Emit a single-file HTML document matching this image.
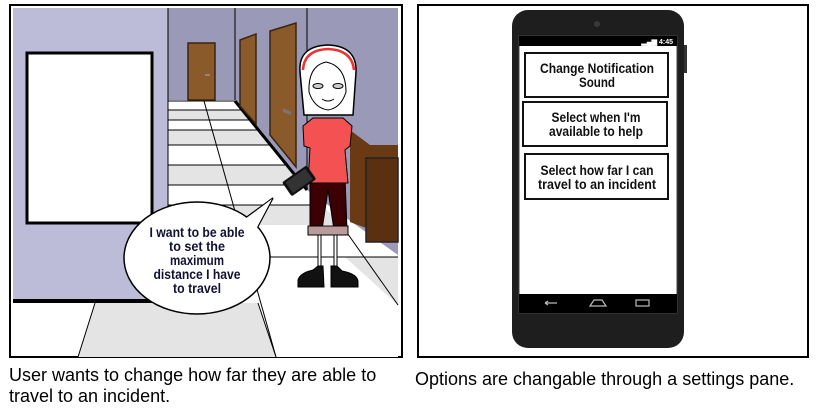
<!DOCTYPE html>
<html><head><meta charset="utf-8"><style>
html,body{margin:0;padding:0;background:#fff;width:818px;height:413px;overflow:hidden}
.cap{position:absolute;font-family:"Liberation Sans",sans-serif;font-size:18px;color:#000;line-height:21px}
.bt{font-family:"Liberation Sans",sans-serif;font-weight:bold;text-anchor:middle}
</style></head><body>
<svg width="818" height="413" style="position:absolute;left:0;top:0" xmlns="http://www.w3.org/2000/svg">
<rect x="10" y="5" width="392" height="352" fill="#fff" stroke="#000" stroke-width="2"/>
<rect x="168" y="8" width="230" height="95" fill="#9a9ab8"/>
<rect x="307" y="8" width="91" height="250" fill="#9a9ab8"/>
<polygon points="235,8 307,8 307,190 235,100" fill="#9a9ab8"/>
<line x1="235" y1="8" x2="235" y2="100" stroke="#000" stroke-width="1"/>
<line x1="307" y1="8" x2="307" y2="190" stroke="#000" stroke-width="1"/>
<polygon points="168,100 235,100 307,190 398,255 398,357 168,357" fill="#fff"/>
<g fill="#e4e4e4">
<polygon points="168,110 243,110 252,120 168,120"/>
<polygon points="168,130 260,130 272,145 168,145"/>
<polygon points="168,165 285,165 300,185 168,185"/>
<polygon points="168,205 320,205 345,225 168,225"/>
<polygon points="345,257 398,257 398,305"/>
</g>
<g stroke="#000" stroke-width="1">
<line x1="168" y1="101" x2="235" y2="101"/>
<line x1="168" y1="110" x2="243" y2="110"/>
<line x1="168" y1="120" x2="252" y2="120"/>
<line x1="168" y1="130" x2="260" y2="130"/>
<line x1="168" y1="145" x2="272" y2="145"/>
<line x1="168" y1="165" x2="285" y2="165"/>
<line x1="168" y1="185" x2="300" y2="185"/>
<line x1="168" y1="205" x2="320" y2="205"/>
<line x1="204" y1="101" x2="276" y2="357"/>
<line x1="268" y1="257" x2="398" y2="257"/>
<line x1="345" y1="230" x2="398" y2="305"/>
</g>
<line x1="235" y1="101" x2="307" y2="190" stroke="#000" stroke-width="3"/>
<rect x="188" y="43" width="27" height="57" fill="#8b5a2b" stroke="#3a2410" stroke-width="1.5"/>
<rect x="205" y="74" width="5" height="2" fill="#888"/>
<polygon points="240,40 256,34 256,124 240,106" fill="#8b5a2b" stroke="#3a2410" stroke-width="1.5"/>
<polygon points="270,31 296,23 296,167 270,135" fill="#8b5a2b" stroke="#3a2410" stroke-width="1.5"/>
<polygon points="283,108 291,112 291,115 283,112" fill="#777"/>
<polygon points="350,130 370,145 398,145 398,240 350,222" fill="#6a3a14"/>
<rect x="366" y="158" width="32" height="84" fill="#5a3010" stroke="#222" stroke-width="1.5"/>
<rect x="13" y="8" width="155" height="295" fill="#bcbcd8"/>
<line x1="168" y1="8" x2="168" y2="303" stroke="#000" stroke-width="1"/>
<rect x="13" y="299" width="155" height="4" fill="#000"/>
<rect x="27" y="53" width="125" height="170" fill="#fff" stroke="#000" stroke-width="3"/>
<polygon points="95,303 258,303 276,357 78,357" fill="#e4e4e4"/>
<line x1="95" y1="303" x2="78" y2="357" stroke="#000"/>
<line x1="258" y1="303" x2="276" y2="357" stroke="#000"/>
<g stroke="#000" stroke-width="1">
<rect x="318" y="228" width="3" height="40" fill="#fff"/>
<rect x="334" y="228" width="3" height="40" fill="#fff"/>
<path d="M298,287 L298,280 Q300,273 313,270 L318,266 L323,266 L324,287 Z" fill="#111"/>
<path d="M331,287 L331,266 L337,266 L342,271 Q358,274 358,282 L358,287 Z" fill="#111"/>
<path d="M310,178 L345,178 L347,230 L334,230 L328,190 L322,230 L310,230 Z" fill="#3c0004"/>
<rect x="308" y="226" width="40" height="9" fill="#b89c9c"/>
<path d="M313,118 L343,118 L352,126 L350,146 L345,150 L348,183 L308,183 L310,148 L304,146 L303,126 Z" fill="#f45252"/>
<path d="M300,72 Q298,46 328,45 Q357,46 356,72 L353,115 L304,115 Z" fill="#fff" stroke-width="1.5"/>
<path d="M303,70 Q304,50 328,49 Q352,50 354,70" fill="none" stroke="#e33" stroke-width="2.5"/>
<path d="M309,92 Q308,66 326,62 Q346,66 346,92 Q341,108 328,110 Q314,108 309,92 Z" fill="#fff"/>
<ellipse cx="318" cy="86" rx="5" ry="2.5" fill="#ccc"/>
<ellipse cx="338" cy="86" rx="5" ry="2.5" fill="#ccc"/>
<path d="M322,99 Q328,103 334,99" fill="none"/>
</g>
<g transform="rotate(-35 300 182)"><rect x="285" y="172" width="30" height="17" rx="2" fill="#111"/><rect x="288" y="174" width="24" height="13" fill="#333"/></g>
<path d="M240,222 L273,198 L256,230 Z" fill="#fff" stroke="#000" stroke-width="1.5"/>
<ellipse cx="197" cy="258" rx="73" ry="56" fill="#fff" stroke="#000" stroke-width="1.5"/>
<path d="M241,222 L272,199 L255,231" fill="#fff" stroke="none"/>
<g class="bt" font-size="14" fill="#111133" lengthAdjust="spacingAndGlyphs">
<text x="197" y="237" textLength="95" lengthAdjust="spacingAndGlyphs">I want to be able</text>
<text x="197" y="251" textLength="56" lengthAdjust="spacingAndGlyphs">to set the</text>
<text x="197" y="265" textLength="54" lengthAdjust="spacingAndGlyphs">maximum</text>
<text x="197" y="279" textLength="87" lengthAdjust="spacingAndGlyphs">distance I have</text>
<text x="197" y="293" textLength="48" lengthAdjust="spacingAndGlyphs">to travel</text>
</g>
<rect x="418" y="5" width="390" height="352" fill="#fff" stroke="#000" stroke-width="2"/>
<rect x="512" y="10" width="172" height="338" rx="16" fill="#1e1e1e"/>
<circle cx="597" cy="24" r="3" fill="#3a3a3a"/>
<rect x="684" y="45" width="3" height="28" fill="#333"/>
<rect x="519" y="36" width="158" height="277" fill="#fff" stroke="#444"/>
<rect x="519" y="36" width="158" height="10" fill="#000"/>
<text x="673" y="44" font-family="Liberation Sans" font-size="7" fill="#fff" text-anchor="end" font-weight="bold">▂▄▆ 4:45</text>
<rect x="519" y="294" width="158" height="19" fill="#000"/>
<g stroke="#bbb" stroke-width="1.2" fill="none">
<path d="M545,303 h12 M545,303 l3,-2 M545,303 l3,2"/>
<path d="M590,306 L594,300 L602,300 L606,306 Z"/>
<rect x="636" y="300" width="13" height="6"/>
</g>
<g fill="#fff" stroke="#111" stroke-width="2">
<rect x="525" y="53" width="143" height="44"/>
<rect x="523" y="102" width="144" height="44"/>
<rect x="525" y="154" width="143" height="45"/>
</g>
<g class="bt" font-size="14" fill="#111">
<text x="597" y="73" textLength="114" lengthAdjust="spacingAndGlyphs">Change Notification</text>
<text x="597" y="87" textLength="36" lengthAdjust="spacingAndGlyphs">Sound</text>
<text x="596" y="122" textLength="89" lengthAdjust="spacingAndGlyphs">Select when I'm</text>
<text x="596" y="136" textLength="94" lengthAdjust="spacingAndGlyphs">available to help</text>
<text x="597" y="175" textLength="113" lengthAdjust="spacingAndGlyphs">Select how far I can</text>
<text x="597" y="189" textLength="118" lengthAdjust="spacingAndGlyphs">travel to an incident</text>
</g>
</svg>
<div class="cap" style="left:9px;top:365px">User wants to change how far they are able to<br>travel to an incident.</div>
<div class="cap" style="left:415px;top:369px">Options are changable through a settings pane.</div>
</body></html>
